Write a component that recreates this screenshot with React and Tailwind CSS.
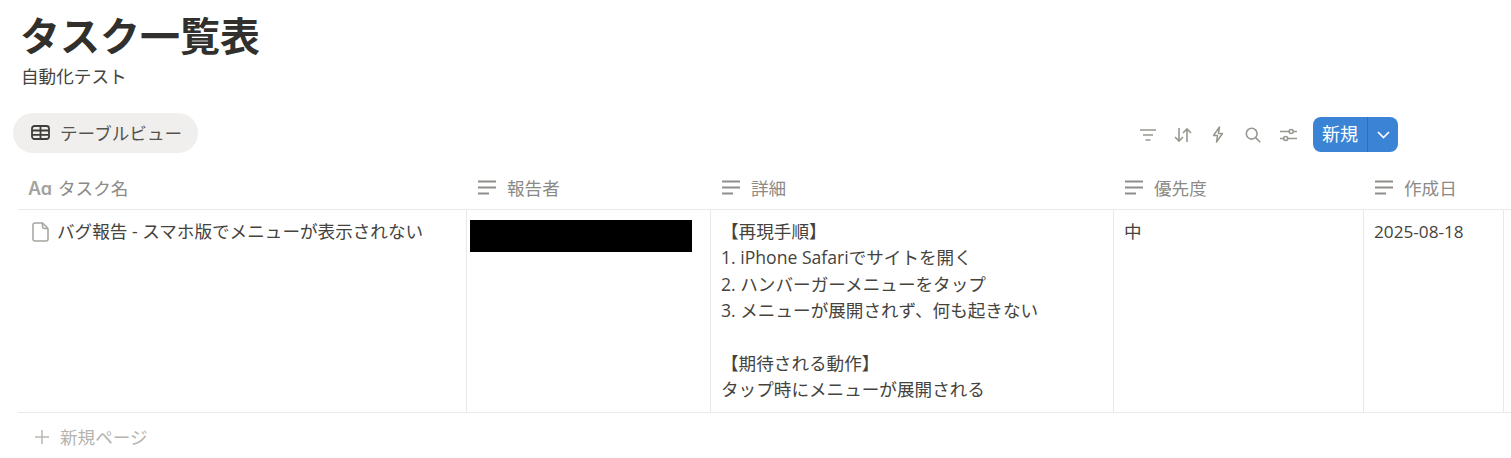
function Lines() {
  return (
    <svg width="18" height="16" viewBox="0 0 18 16" className="-mt-[2px]">
      <path d="M0 1.5h18M0 7.5h18M0 13.5h11" stroke="#8f8e8a" strokeWidth="2" fill="none" />
    </svg>
  );
}

function Head({ w, label }) {
  return (
    <div className={`${w} flex items-center pl-[11px] gap-[11px] text-[#8b8a86]`}>
      <Lines />
      <span>{label}</span>
    </div>
  );
}

export default function App() {
  return (
    <div className="w-[1511px] h-[458px] overflow-hidden bg-white text-[#45433e] text-[17.6px] font-['Open_Sans','Noto_Sans_CJK_JP',sans-serif]">
      <div className="pl-[20px] pt-[10px]">
        <h1 className="text-[40px] leading-[52px] font-bold text-[#32302c]">タスク一覧表</h1>
        <p className="leading-[26px] mt-[1px] pl-[1px]">自動化テスト</p>
      </div>

      <div className="flex items-start mt-[24px] pl-[13px]">
        <div className="w-[185px] h-[40px] rounded-full bg-[#f0efed] flex items-center pl-[18px] gap-[10px] text-[#55534e]">
          <svg width="19" height="15" viewBox="0 0 19 15" fill="none" stroke="#3f3e3a" strokeWidth="1.8" className="-mt-[2px]">
            <rect x="1" y="1" width="17" height="13" rx="2.5" />
            <path d="M1 5.5h17M1 9.8h17M9.5 1V14" />
          </svg>
          <span className="pt-[1px]">テーブルビュー</span>
        </div>
        <div className="flex items-center ml-[941px] mt-[4px] h-[35px]">
          <svg width="16" height="14" viewBox="0 0 16 14" fill="none" stroke="#98978f" strokeWidth="1.7" className="ml-[1px] mt-[1px]">
            <path d="M0 2h16M3 7h10M5.5 12h5" />
          </svg>
          <svg width="18" height="16" viewBox="0 0 18 16" fill="none" stroke="#98978f" strokeWidth="1.6" className="ml-[18px]">
            <path d="M5 1v13M1 10l4 4 4-4M13 15V2M9 6l4-4 4 4" />
          </svg>
          <svg width="12" height="17" viewBox="0 0 12 17" fill="none" stroke="#98978f" strokeWidth="1.5" className="ml-[20px]">
            <path d="M7.5 1 1.5 9.5h4L4.5 16l6-8.5h-4z" strokeLinejoin="round" />
          </svg>
          <svg width="16" height="16" viewBox="0 0 16 16" fill="none" stroke="#98978f" strokeWidth="1.6" className="ml-[21px]">
            <circle cx="6.7" cy="6.7" r="5.4" />
            <path d="m10.6 10.6 4.6 4.6" />
          </svg>
          <svg width="17" height="14" viewBox="0 0 17 14" fill="none" stroke="#98978f" strokeWidth="1.6" className="ml-[19px]">
            <path d="M0 3.5h9M13.5 3.5H17M0 10.5h3.5M8 10.5h9" />
            <circle cx="11.2" cy="3.5" r="2" />
            <circle cx="5.7" cy="10.5" r="2" />
          </svg>
          <div className="ml-[16px] w-[85px] h-[35px] rounded-[8px] bg-[#3a83d5] flex text-white">
            <span className="w-[55px] flex items-center justify-center border-r border-[#2f70bb] text-[18px]">新規</span>
            <span className="flex-1 flex items-center justify-center">
              <svg width="13" height="8" viewBox="0 0 13 8" fill="none" stroke="white" strokeWidth="1.7">
                <path d="m1 1 5.5 5.5L12 1" />
              </svg>
            </span>
          </div>
        </div>
      </div>

      <div className="ml-[18px] mt-[15px]">
        <div className="flex h-[41px] border-b border-[#e9e9e7] box-content">
          <div className="w-[449px] flex items-center pl-[10px] gap-[8px] text-[#8b8a86]">
            <span className="text-[18px] font-semibold text-[#a3a29e] w-[22px] leading-none font-['Inter',sans-serif] [font-feature-settings:'cv11']">Aa</span>
            <span>タスク名</span>
          </div>
          <Head w="w-[244px]" label="報告者" />
          <Head w="w-[403px]" label="詳細" />
          <Head w="w-[250px]" label="優先度" />
          <Head w="w-[140px]" label="作成日" />
        </div>

        <div className="flex h-[202px] border-b border-[#e9e9e7] box-content leading-[26.4px]">
          <div className="w-[449px] border-r border-[#e9e9e7] pl-[14px] pt-[8px] flex items-start gap-[8px]">
            <svg width="17" height="20" viewBox="0 0 17 20" fill="none" stroke="#a5a4a0" strokeWidth="1.5" className="mt-[4px]">
              <path d="M3 1h7.5L16 6.5V17a2 2 0 0 1-2 2H3a2 2 0 0 1-2-2V3a2 2 0 0 1 2-2Z" />
              <path d="M10.5 1v3.5a2 2 0 0 0 2 2H16" />
            </svg>
            <span>バグ報告 - スマホ版でメニューが表示されない</span>
          </div>
          <div className="w-[244px] border-r border-[#e9e9e7] pl-[3px] pt-[10px]">
            <div className="w-[222px] h-[32px] bg-black" />
          </div>
          <div className="w-[403px] border-r border-[#e9e9e7] pl-[10px] pt-[8px] whitespace-pre-line">
            {"【再現手順】\n1. iPhone Safariでサイトを開く\n2. ハンバーガーメニューをタップ\n3. メニューが展開されず、何も起きない\n\n【期待される動作】\nタップ時にメニューが展開される"}
          </div>
          <div className="w-[250px] border-r border-[#e9e9e7] pl-[10px] pt-[8px]">中</div>
          <div className="w-[140px] border-r border-[#e9e9e7] pl-[10px] pt-[9px] text-[17.2px]">2025-08-18</div>
        </div>

        <div className="flex items-center h-[48px] pl-[17px] gap-[12px] text-[#b4b3af]">
          <svg width="14" height="14" viewBox="0 0 14 14" fill="none" stroke="#b9b8b4" strokeWidth="1.5">
            <path d="M7 0v14M0 7h14" />
          </svg>
          <span className="-ml-[1px]">新規ページ</span>
        </div>
      </div>
    </div>
  );
}
